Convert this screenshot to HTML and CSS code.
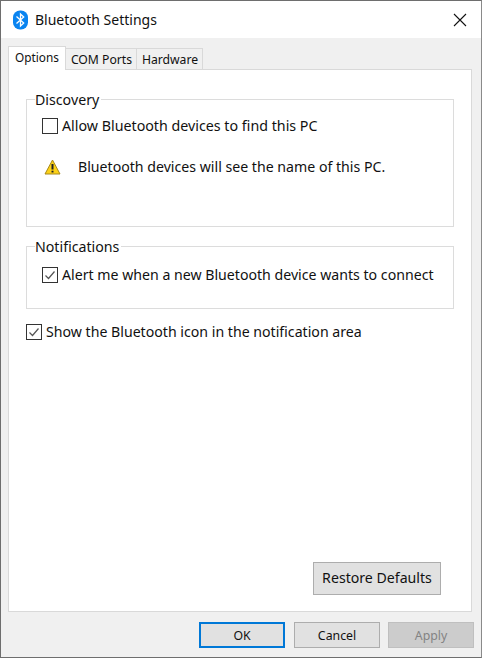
FILE: index.html
```html
<!DOCTYPE html>
<html lang="en">
<head>
  <meta charset="UTF-8">
  <meta name="viewport" content="width=device-width, initial-scale=1.0">
  <title>Bluetooth Settings</title>
  <link rel="stylesheet" href="styles.css">
</head>
<body>
  <div class="window">
    <div class="titlebar">
      <svg class="bt-icon" width="15" height="20" viewBox="0 0 15 20">
        <rect x="0" y="0.5" width="15" height="19" rx="7" fill="#0a84f0"/>
        <path d="M3.5 6.5 L10.7 13 L7.5 16 V4 L10.7 7 L3.5 13.5" fill="none" stroke="#fff" stroke-width="1.3"/>
      </svg>
      <span class="title">Bluetooth Settings</span>
      <svg class="close" width="14" height="14" viewBox="0 0 14 14">
        <path d="M1 1 L13 13 M13 1 L1 13" stroke="#111" stroke-width="1.1"/>
      </svg>
    </div>

    <div class="content">
      <div class="tabs">
        <div class="tab active">Options</div>
        <div class="tab com">COM Ports</div>
        <div class="tab hardware">Hardware</div>
      </div>

      <div class="panel">
        <fieldset class="group discovery">
          <legend>Discovery</legend>
          <div class="check-row">
            <span class="check"></span>
            <span class="label">Allow Bluetooth devices to find this PC</span>
          </div>
          <div class="warning-row">
            <svg class="warn-icon" width="17" height="16" viewBox="0 0 17 16">
              <path d="M8.5 1 L16 15 H1 Z" fill="#fcd116" stroke="#a8891a" stroke-width="1" stroke-linejoin="round"/>
              <path d="M8.5 5 V10.5" stroke="#222" stroke-width="2"/>
              <path d="M8.5 11.7 V13.5" stroke="#222" stroke-width="2"/>
            </svg>
            <span class="label">Bluetooth devices will see the name of this PC.</span>
          </div>
        </fieldset>

        <fieldset class="group notifications">
          <legend>Notifications</legend>
          <div class="check-row">
            <span class="check">
              <svg width="14" height="14" viewBox="0 0 14 14"><path d="M2.5 7.5 L5.5 10.5 L11.5 3.5" fill="none" stroke="#555" stroke-width="1.2"/></svg>
            </span>
            <span class="label">Alert me when a new Bluetooth device wants to connect</span>
          </div>
        </fieldset>

        <div class="check-row show-icon">
          <span class="check">
            <svg width="14" height="14" viewBox="0 0 14 14"><path d="M2.5 7.5 L5.5 10.5 L11.5 3.5" fill="none" stroke="#555" stroke-width="1.2"/></svg>
          </span>
          <span class="label">Show the Bluetooth icon in the notification area</span>
        </div>

        <div class="restore-row">
          <button class="btn restore">Restore Defaults</button>
        </div>
      </div>

      <div class="footer">
        <button class="btn small primary">OK</button>
        <button class="btn small">Cancel</button>
        <button class="btn small disabled">Apply</button>
      </div>
    </div>
  </div>
</body>
</html>
```

FILE: styles.css
```css
* {
  box-sizing: border-box;
}
html, body {
  margin: 0;
  padding: 0;
}
body {
  width: 482px;
  height: 658px;
  font-family: "Noto Sans", "Open Sans", sans-serif;
  font-size: 14px;
  color: #111;
  overflow: hidden;
}
.window {
  width: 482px;
  height: 658px;
  display: flex;
  flex-direction: column;
  border: 1px solid #6e6e6e;
  border-right-color: #8a8a8a;
  background: #f0f0f0;
}
.titlebar {
  height: 37px;
  flex: none;
  display: flex;
  align-items: center;
  padding: 0 14px 0 12px;
  background: #fff;
}
.bt-icon {
  flex: none;
  margin-right: 7px;
}
.title {
  font-size: 14px;
  flex: 1;
}
.close {
  flex: none;
}
.content {
  flex: 1;
  display: flex;
  flex-direction: column;
  padding: 8px 7px 9px 7px;
}
.tabs {
  display: flex;
  height: 24px;
  flex: none;
  align-items: flex-end;
  position: relative;
  z-index: 1;
}
.tab {
  height: 22px;
  padding-left: 1px;
  font-size: 12.2px;
  line-height: 21px;
  text-align: center;
  border: 1px solid #d9d9d9;
  border-left: 0;
  background: #f0f0f0;
}
.tab.active {
  width: 58px;
  height: 24px;
  padding-left: 0;
  font-size: 11.8px;
  line-height: 21px;
  background: #fff;
  border-left: 1px solid #d9d9d9;
  border-bottom: 0;
}
.com {
  width: 71px;
}
.hardware {
  width: 66px;
}
.panel {
  width: 464px;
  height: 543px;
  flex: none;
  display: flex;
  flex-direction: column;
  padding: 18px 17px 16px 17px;
  margin-top: -1px;
  background: #fff;
  border: 1px solid #d9d9d9;
}
.group {
  margin: 0;
  padding: 0 9px;
  border: 1px solid #dcdcdc;
  min-width: 0;
}
.group legend {
  padding: 2px 2px 0 0;
  margin-left: -1px;
  font-size: 14.2px;
  line-height: 20px;
}
.discovery {
  height: 139px;
}
.notifications {
  height: 74px;
  margin-top: 8px;
}
.check-row {
  display: flex;
  align-items: center;
  gap: 4px;
  height: 20px;
  white-space: nowrap;
}
.label {
  font-size: 14.15px;
  margin-top: -2px;
}
.discovery .check-row {
  margin: 6px 0 0 6px;
}
.discovery .check-row .label {
  font-size: 14.25px;
}
.notifications .check-row {
  margin: 8px 0 0 6px;
}
.check {
  width: 16px;
  height: 16px;
  flex: none;
  display: flex;
  align-items: center;
  justify-content: center;
  background: #fff;
  border: 1px solid #333;
}
.warning-row {
  display: flex;
  align-items: center;
  height: 20px;
  margin: 21px 0 0 8px;
  white-space: nowrap;
}
.warn-icon {
  flex: none;
  margin-right: 17px;
}
.show-icon {
  margin-top: 13px;
}
.restore-row {
  margin-top: auto;
  display: flex;
  justify-content: flex-end;
  margin-right: 13px;
}
.btn {
  font-family: inherit;
  color: #111;
  background: #e1e1e1;
  border: 1px solid #adadad;
  padding: 0;
}
.restore {
  width: 128px;
  height: 33px;
  padding-bottom: 2px;
  font-size: 14.15px;
}
.footer {
  display: flex;
  justify-content: flex-end;
  gap: 8px;
  margin-top: 10px;
}
.small {
  width: 86px;
  height: 26px;
  font-size: 12.3px;
}
.primary {
  border: 2px solid #0078d7;
  margin-right: 1px;
}
.disabled {
  background: #cccccc;
  border-color: #bfbfbf;
  color: #838383;
}
```
